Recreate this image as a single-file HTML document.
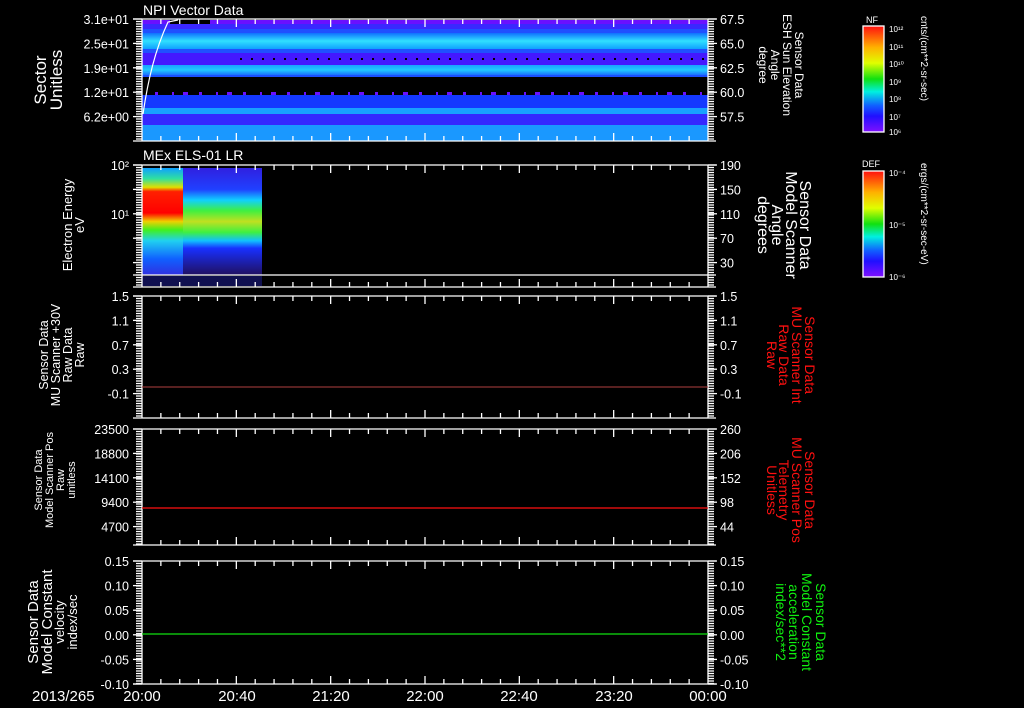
<!DOCTYPE html>
<html><head><meta charset="utf-8">
<style>
html,body{margin:0;padding:0;background:#000;width:1024px;height:708px;overflow:hidden}
svg{display:block}
text{font-family:"Liberation Sans",sans-serif;fill:#fff}
</style></head><body>
<svg id="s" width="1024" height="708" viewBox="0 0 1024 708" xmlns="http://www.w3.org/2000/svg">
<defs>
<linearGradient id="cy" x1="0" y1="0" x2="0" y2="1">
<stop offset="0" stop-color="#1070ff"/><stop offset="0.5" stop-color="#30e0ff"/><stop offset="1" stop-color="#10a0ff"/>
</linearGradient>
<linearGradient id="cy2" x1="0" y1="0" x2="0" y2="1">
<stop offset="0" stop-color="#1aa0ff"/><stop offset="0.5" stop-color="#20c8ff"/><stop offset="1" stop-color="#1a70ff"/>
</linearGradient>
<linearGradient id="p2a" x1="0" y1="168" x2="0" y2="275" gradientUnits="userSpaceOnUse">
<stop offset="0" stop-color="#10a0ff"/><stop offset="0.1" stop-color="#30e0a0"/><stop offset="0.18" stop-color="#e0e000"/>
<stop offset="0.22" stop-color="#ff2000"/><stop offset="0.42" stop-color="#ff0000"/><stop offset="0.5" stop-color="#f0d000"/>
<stop offset="0.58" stop-color="#40f020"/><stop offset="0.68" stop-color="#20d0f0"/><stop offset="0.85" stop-color="#1060ff"/><stop offset="1" stop-color="#3030e0"/>
</linearGradient>
<linearGradient id="p2b" x1="0" y1="168" x2="0" y2="275" gradientUnits="userSpaceOnUse">
<stop offset="0" stop-color="#3020e0"/><stop offset="0.2" stop-color="#2040ff"/><stop offset="0.3" stop-color="#10d0ff"/>
<stop offset="0.4" stop-color="#40f040"/><stop offset="0.5" stop-color="#c0e020"/><stop offset="0.6" stop-color="#40f040"/>
<stop offset="0.68" stop-color="#10c0ff"/><stop offset="0.75" stop-color="#1830ff"/><stop offset="1" stop-color="#201060"/>
</linearGradient>
<linearGradient id="cb" x1="0" y1="0" x2="0" y2="1">
<stop offset="0" stop-color="#ff1010"/><stop offset="0.2" stop-color="#ffb000"/><stop offset="0.35" stop-color="#e0ff00"/>
<stop offset="0.5" stop-color="#10e010"/><stop offset="0.62" stop-color="#00f0e0"/><stop offset="0.75" stop-color="#1060ff"/>
<stop offset="0.85" stop-color="#2010ff"/><stop offset="1" stop-color="#8010ff"/>
</linearGradient>
</defs>
<!-- panel 1 -->
<g>
<rect x="142" y="20" width="566" height="4" fill="#6a10ff"/>
<rect x="142" y="24" width="566" height="5" fill="#3a28ff"/>
<rect x="142" y="29" width="566" height="4" fill="#2050ff"/>
<rect x="142" y="33" width="566" height="16" fill="url(#cy)"/>
<rect x="142" y="49" width="566" height="4" fill="#2050ff"/>
<rect x="142" y="53" width="566" height="12" fill="#4418ff"/>
<rect x="142" y="65" width="566" height="10" fill="url(#cy2)"/>
<rect x="142" y="75" width="566" height="2" fill="#1a50ff"/>
<rect x="142" y="77" width="566" height="18" fill="#000"/>
<rect x="142" y="95" width="566" height="13" fill="#1438ff"/>
<rect x="142" y="108" width="566" height="6" fill="#18a0ff"/>
<rect x="142" y="114" width="566" height="11" fill="#3428ff"/>
<rect x="142" y="125" width="566" height="16" fill="#1a98ff"/>
</g>
<rect x="170" y="20" width="40" height="4" fill="#000"/>
<line x1="240" y1="59" x2="708" y2="59" stroke="#000" stroke-width="2" stroke-dasharray="2 9"/>
<path d="M143 114 C148 80,155 50,168 22 L178 20" stroke="#fff" stroke-width="1.2" fill="none"/>
<line x1="155" y1="93.5" x2="708" y2="93.5" stroke="#6a10ff" stroke-width="3" stroke-dasharray="3 14 2 9 5 11"/>
<!-- panel 2 -->
<rect x="142" y="168" width="41" height="107" fill="url(#p2a)"/>
<rect x="183" y="168" width="79" height="107" fill="url(#p2b)"/>
<rect x="142" y="276" width="120" height="10" fill="#2020a0" opacity="0.5"/>
<g id="ax" stroke="#fff" fill="none" stroke-width="1.3"></g>
<line x1="142" y1="387" x2="708" y2="387" stroke="#b04040" stroke-width="1"/>
<line x1="142" y1="508" x2="708" y2="508" stroke="#ff1010" stroke-width="1.3"/>
<line x1="142" y1="634" x2="708" y2="634" stroke="#10e010" stroke-width="1.3"/>
<!-- colorbars -->
<rect x="863" y="26" width="21" height="106" fill="url(#cb)" stroke="#fff" stroke-width="1.3"/>
<rect x="863" y="171" width="21" height="106" fill="url(#cb)" stroke="#fff" stroke-width="1.3"/>
<text x="866" y="23" font-size="9">NF</text>
<text x="862" y="167" font-size="9">DEF</text>
<g font-size="8">
<text x="889" y="32">10¹²</text><text x="889" y="50">10¹¹</text><text x="889" y="67">10¹⁰</text><text x="889" y="85">10⁹</text><text x="889" y="102">10⁸</text><text x="889" y="120">10⁷</text><text x="889" y="135">10⁶</text>
<text x="889" y="176">10⁻⁴</text><text x="889" y="228">10⁻⁵</text><text x="889" y="280">10⁻⁶</text>
</g>
<text transform="translate(921,16) rotate(90)" font-size="10">cnts/(cm**2-sr-sec)</text>
<text transform="translate(921,163) rotate(90)" font-size="10">ergs/(cm**2-sr-sec-eV)</text>
<!-- titles -->
<text x="143" y="15" font-size="14">NPI Vector Data</text>
<text x="143" y="160" font-size="14">MEx ELS-01 LR</text>
<g font-size="12.5" id="lab"></g>
<!-- left labels -->
<g text-anchor="middle">
<text transform="translate(46,80) rotate(-90)" font-size="17">Sector</text>
<text transform="translate(62,80) rotate(-90)" font-size="17">Unitless</text>
<text transform="translate(72,225) rotate(-90)" font-size="13">Electron Energy</text>
<text transform="translate(84,225) rotate(-90)" font-size="13">eV</text>
<text transform="translate(48,355) rotate(-90)" font-size="12.5">Sensor Data</text>
<text transform="translate(60,355) rotate(-90)" font-size="12.5">MU Scanner +30V</text>
<text transform="translate(72,355) rotate(-90)" font-size="12.5">Raw Data</text>
<text transform="translate(84,355) rotate(-90)" font-size="12.5">Raw</text>
<text transform="translate(42,480) rotate(-90)" font-size="11">Sensor Data</text>
<text transform="translate(53,480) rotate(-90)" font-size="11">Model Scanner Pos</text>
<text transform="translate(64,480) rotate(-90)" font-size="11">Raw</text>
<text transform="translate(75,480) rotate(-90)" font-size="11">unitless</text>
<text transform="translate(38,622) rotate(-90)" font-size="15">Sensor Data</text>
<text transform="translate(52,622) rotate(-90)" font-size="15">Model Constant</text>
<text transform="translate(64,622) rotate(-90)" font-size="13">velocity</text>
<text transform="translate(77,622) rotate(-90)" font-size="13">index/sec</text>
<!-- right labels -->
<text transform="translate(795,65) rotate(90)" font-size="12">Sensor Data</text>
<text transform="translate(783,65) rotate(90)" font-size="12">ESH Sun Elevation</text>
<text transform="translate(771,65) rotate(90)" font-size="12">Angle</text>
<text transform="translate(759,65) rotate(90)" font-size="12">degree</text>
<text transform="translate(800,225) rotate(90)" font-size="16">Sensor Data</text>
<text transform="translate(786,225) rotate(90)" font-size="16">Model Scanner</text>
<text transform="translate(772,225) rotate(90)" font-size="16">Angle</text>
<text transform="translate(758,225) rotate(90)" font-size="16">degrees</text>
<text transform="translate(805,355) rotate(90)" font-size="14" style="fill:#ff1010">Sensor Data</text>
<text transform="translate(792,355) rotate(90)" font-size="14" style="fill:#ff1010">MU Scanner Int</text>
<text transform="translate(779,355) rotate(90)" font-size="14" style="fill:#ff1010">Raw Data</text>
<text transform="translate(767,355) rotate(90)" font-size="14" style="fill:#ff1010">Raw</text>
<text transform="translate(805,490) rotate(90)" font-size="14" style="fill:#ff1010">Sensor Data</text>
<text transform="translate(792,490) rotate(90)" font-size="14" style="fill:#ff1010">MU Scanner Pos</text>
<text transform="translate(779,490) rotate(90)" font-size="14" style="fill:#ff1010">Telemetry</text>
<text transform="translate(767,490) rotate(90)" font-size="14" style="fill:#ff1010">Unitless</text>
<text transform="translate(816,622) rotate(90)" font-size="14" style="fill:#10f010">Sensor Data</text>
<text transform="translate(802,622) rotate(90)" font-size="14" style="fill:#10f010">Model Constant</text>
<text transform="translate(789,622) rotate(90)" font-size="14" style="fill:#10f010">acceleration</text>
<text transform="translate(776,622) rotate(90)" font-size="14" style="fill:#10f010">index/sec**2</text>
</g>
<g font-size="15">
<text x="32" y="701">2013/265</text>
<text x="142" y="701" text-anchor="middle">20:00</text>
<text x="237" y="701" text-anchor="middle">20:40</text>
<text x="331" y="701" text-anchor="middle">21:20</text>
<text x="425" y="701" text-anchor="middle">22:00</text>
<text x="519" y="701" text-anchor="middle">22:40</text>
<text x="614" y="701" text-anchor="middle">23:20</text>
<text x="708" y="701" text-anchor="middle">00:00</text>
</g>
</svg>
<script>
var NS="http://www.w3.org/2000/svg",ax=document.getElementById('ax'),lab=document.getElementById('lab');
function L(x1,y1,x2,y2){var l=document.createElementNS(NS,'line');l.setAttribute('x1',x1);l.setAttribute('y1',y1);l.setAttribute('x2',x2);l.setAttribute('y2',y2);ax.appendChild(l);}
function T(x,y,s,a){var t=document.createElementNS(NS,'text');t.setAttribute('x',x);t.setAttribute('y',y);t.setAttribute('text-anchor',a);t.textContent=s;lab.appendChild(t);}
var P=[[19,141,["3.1e+01","2.5e+01","1.9e+01","1.2e+01","6.2e+00"],["67.5","65.0","62.5","60.0","57.5"]],
[165,287,["10²","","10¹","",""],["190","150","110","70","30"]],
[296,418,["1.5","1.1","0.7","0.3","-0.1"],["1.5","1.1","0.7","0.3","-0.1"]],
[429,545,["23500","18800","14100","9400","4700"],["260","206","152","98","44"]],
[561,684,["0.15","0.10","0.05","0.00","-0.05","-0.10"],["0.15","0.10","0.05","0.00","-0.05","-0.10"]]];
P.forEach(function(p,i){var t=p[0],b=p[1];
L(133,t,716,t);L(133,b,716,b);L(142,t,142,b);L(708,t,708,b);
for(var y=t+2.5;y<b;y+=2.5){L(136,y,142,y);L(708,y,714,y);}
var n=p[2].length,step=(i==4)?(b-t)/5:24.4;
for(var k=0;k<n;k++){var y=t+k*step;L(133,y,142,y);L(708,y,717,y);
if(p[2][k])T(129,y+5,p[2][k],'end');T(720,y+5,p[3][k],'start');}
for(var m=0;m<=30;m++){var x=142+m*566/30;var h=(m%5==0)?8:5;if(m>0&&m<30){L(x,t,x,t+h);L(x,b,x,b-h);}}
});
L(133,275,716,275);
</script>
</body></html>
